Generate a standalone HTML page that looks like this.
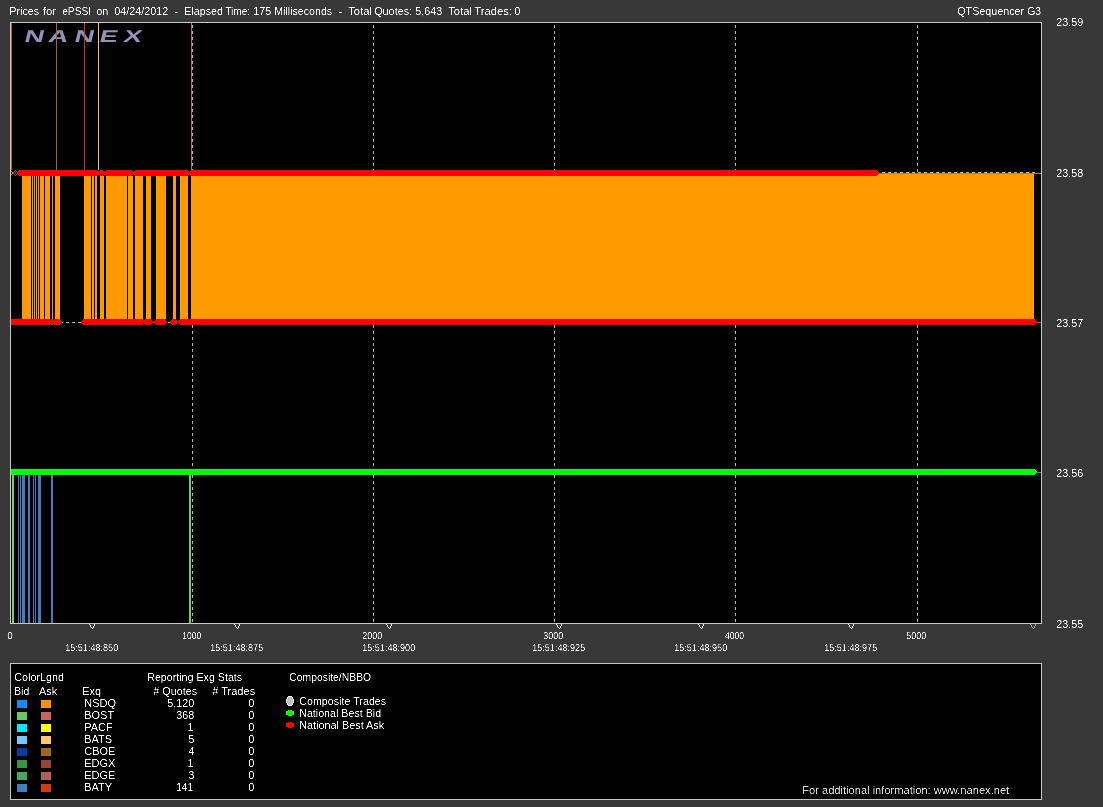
<!DOCTYPE html>
<html><head><meta charset="utf-8"><style>
html,body{margin:0;padding:0;background:#383838;width:1103px;height:807px;overflow:hidden}
svg{display:block;will-change:transform}
text{font-family:"Liberation Sans",sans-serif}
</style></head><body>
<svg width="1103" height="807" viewBox="0 0 1103 807">
<rect x="0" y="0" width="1103" height="807" fill="#383838"/>
<g shape-rendering="crispEdges">
<rect x="10" y="22" width="1032" height="602" fill="#c8c8c8"/>
<rect x="11" y="23" width="1030" height="600" fill="#000"/>
</g><g><text transform="translate(23.5,42) skewX(-14) scale(1.6,1)" x="0" y="0" font-size="17" font-weight="bold" fill="#9292bc" font-family="Liberation Sans, sans-serif">N</text>
<text transform="translate(47.5,42) skewX(-14) scale(1.6,1)" x="0" y="0" font-size="17" font-weight="bold" fill="#9292bc" font-family="Liberation Sans, sans-serif">A</text>
<text transform="translate(73.5,42) skewX(-14) scale(1.6,1)" x="0" y="0" font-size="17" font-weight="bold" fill="#9292bc" font-family="Liberation Sans, sans-serif">N</text>
<text transform="translate(98.5,42) skewX(-14) scale(1.6,1)" x="0" y="0" font-size="17" font-weight="bold" fill="#9292bc" font-family="Liberation Sans, sans-serif">E</text>
<text transform="translate(122.5,42) skewX(-14) scale(1.6,1)" x="0" y="0" font-size="17" font-weight="bold" fill="#9292bc" font-family="Liberation Sans, sans-serif">X</text></g><g shape-rendering="crispEdges">
<rect x="192" y="25" width="1" height="3" fill="#b4b4b4"/>
<rect x="192" y="31" width="1" height="3" fill="#b4b4b4"/>
<rect x="192" y="37" width="1" height="3" fill="#b4b4b4"/>
<rect x="192" y="43" width="1" height="3" fill="#b4b4b4"/>
<rect x="192" y="49" width="1" height="3" fill="#b4b4b4"/>
<rect x="192" y="55" width="1" height="3" fill="#b4b4b4"/>
<rect x="192" y="61" width="1" height="3" fill="#b4b4b4"/>
<rect x="192" y="67" width="1" height="3" fill="#b4b4b4"/>
<rect x="192" y="73" width="1" height="3" fill="#b4b4b4"/>
<rect x="192" y="79" width="1" height="3" fill="#b4b4b4"/>
<rect x="192" y="85" width="1" height="3" fill="#b4b4b4"/>
<rect x="192" y="91" width="1" height="3" fill="#b4b4b4"/>
<rect x="192" y="97" width="1" height="3" fill="#b4b4b4"/>
<rect x="192" y="103" width="1" height="3" fill="#b4b4b4"/>
<rect x="192" y="109" width="1" height="3" fill="#b4b4b4"/>
<rect x="192" y="115" width="1" height="3" fill="#b4b4b4"/>
<rect x="192" y="121" width="1" height="3" fill="#b4b4b4"/>
<rect x="192" y="127" width="1" height="3" fill="#b4b4b4"/>
<rect x="192" y="133" width="1" height="3" fill="#b4b4b4"/>
<rect x="192" y="139" width="1" height="3" fill="#b4b4b4"/>
<rect x="192" y="145" width="1" height="3" fill="#b4b4b4"/>
<rect x="192" y="151" width="1" height="3" fill="#b4b4b4"/>
<rect x="192" y="157" width="1" height="3" fill="#b4b4b4"/>
<rect x="192" y="163" width="1" height="3" fill="#b4b4b4"/>
<rect x="192" y="169" width="1" height="3" fill="#b4b4b4"/>
<rect x="192" y="175" width="1" height="3" fill="#b4b4b4"/>
<rect x="192" y="181" width="1" height="3" fill="#b4b4b4"/>
<rect x="192" y="187" width="1" height="3" fill="#b4b4b4"/>
<rect x="192" y="193" width="1" height="3" fill="#b4b4b4"/>
<rect x="192" y="199" width="1" height="3" fill="#b4b4b4"/>
<rect x="192" y="205" width="1" height="3" fill="#b4b4b4"/>
<rect x="192" y="211" width="1" height="3" fill="#b4b4b4"/>
<rect x="192" y="217" width="1" height="3" fill="#b4b4b4"/>
<rect x="192" y="223" width="1" height="3" fill="#b4b4b4"/>
<rect x="192" y="229" width="1" height="3" fill="#b4b4b4"/>
<rect x="192" y="235" width="1" height="3" fill="#b4b4b4"/>
<rect x="192" y="241" width="1" height="3" fill="#b4b4b4"/>
<rect x="192" y="247" width="1" height="3" fill="#b4b4b4"/>
<rect x="192" y="253" width="1" height="3" fill="#b4b4b4"/>
<rect x="192" y="259" width="1" height="3" fill="#b4b4b4"/>
<rect x="192" y="265" width="1" height="3" fill="#b4b4b4"/>
<rect x="192" y="271" width="1" height="3" fill="#b4b4b4"/>
<rect x="192" y="277" width="1" height="3" fill="#b4b4b4"/>
<rect x="192" y="283" width="1" height="3" fill="#b4b4b4"/>
<rect x="192" y="289" width="1" height="3" fill="#b4b4b4"/>
<rect x="192" y="295" width="1" height="3" fill="#b4b4b4"/>
<rect x="192" y="301" width="1" height="3" fill="#b4b4b4"/>
<rect x="192" y="307" width="1" height="3" fill="#b4b4b4"/>
<rect x="192" y="313" width="1" height="3" fill="#b4b4b4"/>
<rect x="192" y="319" width="1" height="3" fill="#b4b4b4"/>
<rect x="192" y="325" width="1" height="3" fill="#b4b4b4"/>
<rect x="192" y="331" width="1" height="3" fill="#b4b4b4"/>
<rect x="192" y="337" width="1" height="3" fill="#b4b4b4"/>
<rect x="192" y="343" width="1" height="3" fill="#b4b4b4"/>
<rect x="192" y="349" width="1" height="3" fill="#b4b4b4"/>
<rect x="192" y="355" width="1" height="3" fill="#b4b4b4"/>
<rect x="192" y="361" width="1" height="3" fill="#b4b4b4"/>
<rect x="192" y="367" width="1" height="3" fill="#b4b4b4"/>
<rect x="192" y="373" width="1" height="3" fill="#b4b4b4"/>
<rect x="192" y="379" width="1" height="3" fill="#b4b4b4"/>
<rect x="192" y="385" width="1" height="3" fill="#b4b4b4"/>
<rect x="192" y="391" width="1" height="3" fill="#b4b4b4"/>
<rect x="192" y="397" width="1" height="3" fill="#b4b4b4"/>
<rect x="192" y="403" width="1" height="3" fill="#b4b4b4"/>
<rect x="192" y="409" width="1" height="3" fill="#b4b4b4"/>
<rect x="192" y="415" width="1" height="3" fill="#b4b4b4"/>
<rect x="192" y="421" width="1" height="3" fill="#b4b4b4"/>
<rect x="192" y="427" width="1" height="3" fill="#b4b4b4"/>
<rect x="192" y="433" width="1" height="3" fill="#b4b4b4"/>
<rect x="192" y="439" width="1" height="3" fill="#b4b4b4"/>
<rect x="192" y="445" width="1" height="3" fill="#b4b4b4"/>
<rect x="192" y="451" width="1" height="3" fill="#b4b4b4"/>
<rect x="192" y="457" width="1" height="3" fill="#b4b4b4"/>
<rect x="192" y="463" width="1" height="3" fill="#b4b4b4"/>
<rect x="192" y="469" width="1" height="3" fill="#b4b4b4"/>
<rect x="192" y="475" width="1" height="3" fill="#b4b4b4"/>
<rect x="192" y="481" width="1" height="3" fill="#b4b4b4"/>
<rect x="192" y="487" width="1" height="3" fill="#b4b4b4"/>
<rect x="192" y="493" width="1" height="3" fill="#b4b4b4"/>
<rect x="192" y="499" width="1" height="3" fill="#b4b4b4"/>
<rect x="192" y="505" width="1" height="3" fill="#b4b4b4"/>
<rect x="192" y="511" width="1" height="3" fill="#b4b4b4"/>
<rect x="192" y="517" width="1" height="3" fill="#b4b4b4"/>
<rect x="192" y="523" width="1" height="3" fill="#b4b4b4"/>
<rect x="192" y="529" width="1" height="3" fill="#b4b4b4"/>
<rect x="192" y="535" width="1" height="3" fill="#b4b4b4"/>
<rect x="192" y="541" width="1" height="3" fill="#b4b4b4"/>
<rect x="192" y="547" width="1" height="3" fill="#b4b4b4"/>
<rect x="192" y="553" width="1" height="3" fill="#b4b4b4"/>
<rect x="192" y="559" width="1" height="3" fill="#b4b4b4"/>
<rect x="192" y="565" width="1" height="3" fill="#b4b4b4"/>
<rect x="192" y="571" width="1" height="3" fill="#b4b4b4"/>
<rect x="192" y="577" width="1" height="3" fill="#b4b4b4"/>
<rect x="192" y="583" width="1" height="3" fill="#b4b4b4"/>
<rect x="192" y="589" width="1" height="3" fill="#b4b4b4"/>
<rect x="192" y="595" width="1" height="3" fill="#b4b4b4"/>
<rect x="192" y="601" width="1" height="3" fill="#b4b4b4"/>
<rect x="192" y="607" width="1" height="3" fill="#b4b4b4"/>
<rect x="192" y="613" width="1" height="3" fill="#b4b4b4"/>
<rect x="192" y="619" width="1" height="3" fill="#b4b4b4"/>
<rect x="373" y="25" width="1" height="3" fill="#b4b4b4"/>
<rect x="373" y="31" width="1" height="3" fill="#b4b4b4"/>
<rect x="373" y="37" width="1" height="3" fill="#b4b4b4"/>
<rect x="373" y="43" width="1" height="3" fill="#b4b4b4"/>
<rect x="373" y="49" width="1" height="3" fill="#b4b4b4"/>
<rect x="373" y="55" width="1" height="3" fill="#b4b4b4"/>
<rect x="373" y="61" width="1" height="3" fill="#b4b4b4"/>
<rect x="373" y="67" width="1" height="3" fill="#b4b4b4"/>
<rect x="373" y="73" width="1" height="3" fill="#b4b4b4"/>
<rect x="373" y="79" width="1" height="3" fill="#b4b4b4"/>
<rect x="373" y="85" width="1" height="3" fill="#b4b4b4"/>
<rect x="373" y="91" width="1" height="3" fill="#b4b4b4"/>
<rect x="373" y="97" width="1" height="3" fill="#b4b4b4"/>
<rect x="373" y="103" width="1" height="3" fill="#b4b4b4"/>
<rect x="373" y="109" width="1" height="3" fill="#b4b4b4"/>
<rect x="373" y="115" width="1" height="3" fill="#b4b4b4"/>
<rect x="373" y="121" width="1" height="3" fill="#b4b4b4"/>
<rect x="373" y="127" width="1" height="3" fill="#b4b4b4"/>
<rect x="373" y="133" width="1" height="3" fill="#b4b4b4"/>
<rect x="373" y="139" width="1" height="3" fill="#b4b4b4"/>
<rect x="373" y="145" width="1" height="3" fill="#b4b4b4"/>
<rect x="373" y="151" width="1" height="3" fill="#b4b4b4"/>
<rect x="373" y="157" width="1" height="3" fill="#b4b4b4"/>
<rect x="373" y="163" width="1" height="3" fill="#b4b4b4"/>
<rect x="373" y="169" width="1" height="3" fill="#b4b4b4"/>
<rect x="373" y="175" width="1" height="3" fill="#b4b4b4"/>
<rect x="373" y="181" width="1" height="3" fill="#b4b4b4"/>
<rect x="373" y="187" width="1" height="3" fill="#b4b4b4"/>
<rect x="373" y="193" width="1" height="3" fill="#b4b4b4"/>
<rect x="373" y="199" width="1" height="3" fill="#b4b4b4"/>
<rect x="373" y="205" width="1" height="3" fill="#b4b4b4"/>
<rect x="373" y="211" width="1" height="3" fill="#b4b4b4"/>
<rect x="373" y="217" width="1" height="3" fill="#b4b4b4"/>
<rect x="373" y="223" width="1" height="3" fill="#b4b4b4"/>
<rect x="373" y="229" width="1" height="3" fill="#b4b4b4"/>
<rect x="373" y="235" width="1" height="3" fill="#b4b4b4"/>
<rect x="373" y="241" width="1" height="3" fill="#b4b4b4"/>
<rect x="373" y="247" width="1" height="3" fill="#b4b4b4"/>
<rect x="373" y="253" width="1" height="3" fill="#b4b4b4"/>
<rect x="373" y="259" width="1" height="3" fill="#b4b4b4"/>
<rect x="373" y="265" width="1" height="3" fill="#b4b4b4"/>
<rect x="373" y="271" width="1" height="3" fill="#b4b4b4"/>
<rect x="373" y="277" width="1" height="3" fill="#b4b4b4"/>
<rect x="373" y="283" width="1" height="3" fill="#b4b4b4"/>
<rect x="373" y="289" width="1" height="3" fill="#b4b4b4"/>
<rect x="373" y="295" width="1" height="3" fill="#b4b4b4"/>
<rect x="373" y="301" width="1" height="3" fill="#b4b4b4"/>
<rect x="373" y="307" width="1" height="3" fill="#b4b4b4"/>
<rect x="373" y="313" width="1" height="3" fill="#b4b4b4"/>
<rect x="373" y="319" width="1" height="3" fill="#b4b4b4"/>
<rect x="373" y="325" width="1" height="3" fill="#b4b4b4"/>
<rect x="373" y="331" width="1" height="3" fill="#b4b4b4"/>
<rect x="373" y="337" width="1" height="3" fill="#b4b4b4"/>
<rect x="373" y="343" width="1" height="3" fill="#b4b4b4"/>
<rect x="373" y="349" width="1" height="3" fill="#b4b4b4"/>
<rect x="373" y="355" width="1" height="3" fill="#b4b4b4"/>
<rect x="373" y="361" width="1" height="3" fill="#b4b4b4"/>
<rect x="373" y="367" width="1" height="3" fill="#b4b4b4"/>
<rect x="373" y="373" width="1" height="3" fill="#b4b4b4"/>
<rect x="373" y="379" width="1" height="3" fill="#b4b4b4"/>
<rect x="373" y="385" width="1" height="3" fill="#b4b4b4"/>
<rect x="373" y="391" width="1" height="3" fill="#b4b4b4"/>
<rect x="373" y="397" width="1" height="3" fill="#b4b4b4"/>
<rect x="373" y="403" width="1" height="3" fill="#b4b4b4"/>
<rect x="373" y="409" width="1" height="3" fill="#b4b4b4"/>
<rect x="373" y="415" width="1" height="3" fill="#b4b4b4"/>
<rect x="373" y="421" width="1" height="3" fill="#b4b4b4"/>
<rect x="373" y="427" width="1" height="3" fill="#b4b4b4"/>
<rect x="373" y="433" width="1" height="3" fill="#b4b4b4"/>
<rect x="373" y="439" width="1" height="3" fill="#b4b4b4"/>
<rect x="373" y="445" width="1" height="3" fill="#b4b4b4"/>
<rect x="373" y="451" width="1" height="3" fill="#b4b4b4"/>
<rect x="373" y="457" width="1" height="3" fill="#b4b4b4"/>
<rect x="373" y="463" width="1" height="3" fill="#b4b4b4"/>
<rect x="373" y="469" width="1" height="3" fill="#b4b4b4"/>
<rect x="373" y="475" width="1" height="3" fill="#b4b4b4"/>
<rect x="373" y="481" width="1" height="3" fill="#b4b4b4"/>
<rect x="373" y="487" width="1" height="3" fill="#b4b4b4"/>
<rect x="373" y="493" width="1" height="3" fill="#b4b4b4"/>
<rect x="373" y="499" width="1" height="3" fill="#b4b4b4"/>
<rect x="373" y="505" width="1" height="3" fill="#b4b4b4"/>
<rect x="373" y="511" width="1" height="3" fill="#b4b4b4"/>
<rect x="373" y="517" width="1" height="3" fill="#b4b4b4"/>
<rect x="373" y="523" width="1" height="3" fill="#b4b4b4"/>
<rect x="373" y="529" width="1" height="3" fill="#b4b4b4"/>
<rect x="373" y="535" width="1" height="3" fill="#b4b4b4"/>
<rect x="373" y="541" width="1" height="3" fill="#b4b4b4"/>
<rect x="373" y="547" width="1" height="3" fill="#b4b4b4"/>
<rect x="373" y="553" width="1" height="3" fill="#b4b4b4"/>
<rect x="373" y="559" width="1" height="3" fill="#b4b4b4"/>
<rect x="373" y="565" width="1" height="3" fill="#b4b4b4"/>
<rect x="373" y="571" width="1" height="3" fill="#b4b4b4"/>
<rect x="373" y="577" width="1" height="3" fill="#b4b4b4"/>
<rect x="373" y="583" width="1" height="3" fill="#b4b4b4"/>
<rect x="373" y="589" width="1" height="3" fill="#b4b4b4"/>
<rect x="373" y="595" width="1" height="3" fill="#b4b4b4"/>
<rect x="373" y="601" width="1" height="3" fill="#b4b4b4"/>
<rect x="373" y="607" width="1" height="3" fill="#b4b4b4"/>
<rect x="373" y="613" width="1" height="3" fill="#b4b4b4"/>
<rect x="373" y="619" width="1" height="3" fill="#b4b4b4"/>
<rect x="554" y="25" width="1" height="3" fill="#b4b4b4"/>
<rect x="554" y="31" width="1" height="3" fill="#b4b4b4"/>
<rect x="554" y="37" width="1" height="3" fill="#b4b4b4"/>
<rect x="554" y="43" width="1" height="3" fill="#b4b4b4"/>
<rect x="554" y="49" width="1" height="3" fill="#b4b4b4"/>
<rect x="554" y="55" width="1" height="3" fill="#b4b4b4"/>
<rect x="554" y="61" width="1" height="3" fill="#b4b4b4"/>
<rect x="554" y="67" width="1" height="3" fill="#b4b4b4"/>
<rect x="554" y="73" width="1" height="3" fill="#b4b4b4"/>
<rect x="554" y="79" width="1" height="3" fill="#b4b4b4"/>
<rect x="554" y="85" width="1" height="3" fill="#b4b4b4"/>
<rect x="554" y="91" width="1" height="3" fill="#b4b4b4"/>
<rect x="554" y="97" width="1" height="3" fill="#b4b4b4"/>
<rect x="554" y="103" width="1" height="3" fill="#b4b4b4"/>
<rect x="554" y="109" width="1" height="3" fill="#b4b4b4"/>
<rect x="554" y="115" width="1" height="3" fill="#b4b4b4"/>
<rect x="554" y="121" width="1" height="3" fill="#b4b4b4"/>
<rect x="554" y="127" width="1" height="3" fill="#b4b4b4"/>
<rect x="554" y="133" width="1" height="3" fill="#b4b4b4"/>
<rect x="554" y="139" width="1" height="3" fill="#b4b4b4"/>
<rect x="554" y="145" width="1" height="3" fill="#b4b4b4"/>
<rect x="554" y="151" width="1" height="3" fill="#b4b4b4"/>
<rect x="554" y="157" width="1" height="3" fill="#b4b4b4"/>
<rect x="554" y="163" width="1" height="3" fill="#b4b4b4"/>
<rect x="554" y="169" width="1" height="3" fill="#b4b4b4"/>
<rect x="554" y="175" width="1" height="3" fill="#b4b4b4"/>
<rect x="554" y="181" width="1" height="3" fill="#b4b4b4"/>
<rect x="554" y="187" width="1" height="3" fill="#b4b4b4"/>
<rect x="554" y="193" width="1" height="3" fill="#b4b4b4"/>
<rect x="554" y="199" width="1" height="3" fill="#b4b4b4"/>
<rect x="554" y="205" width="1" height="3" fill="#b4b4b4"/>
<rect x="554" y="211" width="1" height="3" fill="#b4b4b4"/>
<rect x="554" y="217" width="1" height="3" fill="#b4b4b4"/>
<rect x="554" y="223" width="1" height="3" fill="#b4b4b4"/>
<rect x="554" y="229" width="1" height="3" fill="#b4b4b4"/>
<rect x="554" y="235" width="1" height="3" fill="#b4b4b4"/>
<rect x="554" y="241" width="1" height="3" fill="#b4b4b4"/>
<rect x="554" y="247" width="1" height="3" fill="#b4b4b4"/>
<rect x="554" y="253" width="1" height="3" fill="#b4b4b4"/>
<rect x="554" y="259" width="1" height="3" fill="#b4b4b4"/>
<rect x="554" y="265" width="1" height="3" fill="#b4b4b4"/>
<rect x="554" y="271" width="1" height="3" fill="#b4b4b4"/>
<rect x="554" y="277" width="1" height="3" fill="#b4b4b4"/>
<rect x="554" y="283" width="1" height="3" fill="#b4b4b4"/>
<rect x="554" y="289" width="1" height="3" fill="#b4b4b4"/>
<rect x="554" y="295" width="1" height="3" fill="#b4b4b4"/>
<rect x="554" y="301" width="1" height="3" fill="#b4b4b4"/>
<rect x="554" y="307" width="1" height="3" fill="#b4b4b4"/>
<rect x="554" y="313" width="1" height="3" fill="#b4b4b4"/>
<rect x="554" y="319" width="1" height="3" fill="#b4b4b4"/>
<rect x="554" y="325" width="1" height="3" fill="#b4b4b4"/>
<rect x="554" y="331" width="1" height="3" fill="#b4b4b4"/>
<rect x="554" y="337" width="1" height="3" fill="#b4b4b4"/>
<rect x="554" y="343" width="1" height="3" fill="#b4b4b4"/>
<rect x="554" y="349" width="1" height="3" fill="#b4b4b4"/>
<rect x="554" y="355" width="1" height="3" fill="#b4b4b4"/>
<rect x="554" y="361" width="1" height="3" fill="#b4b4b4"/>
<rect x="554" y="367" width="1" height="3" fill="#b4b4b4"/>
<rect x="554" y="373" width="1" height="3" fill="#b4b4b4"/>
<rect x="554" y="379" width="1" height="3" fill="#b4b4b4"/>
<rect x="554" y="385" width="1" height="3" fill="#b4b4b4"/>
<rect x="554" y="391" width="1" height="3" fill="#b4b4b4"/>
<rect x="554" y="397" width="1" height="3" fill="#b4b4b4"/>
<rect x="554" y="403" width="1" height="3" fill="#b4b4b4"/>
<rect x="554" y="409" width="1" height="3" fill="#b4b4b4"/>
<rect x="554" y="415" width="1" height="3" fill="#b4b4b4"/>
<rect x="554" y="421" width="1" height="3" fill="#b4b4b4"/>
<rect x="554" y="427" width="1" height="3" fill="#b4b4b4"/>
<rect x="554" y="433" width="1" height="3" fill="#b4b4b4"/>
<rect x="554" y="439" width="1" height="3" fill="#b4b4b4"/>
<rect x="554" y="445" width="1" height="3" fill="#b4b4b4"/>
<rect x="554" y="451" width="1" height="3" fill="#b4b4b4"/>
<rect x="554" y="457" width="1" height="3" fill="#b4b4b4"/>
<rect x="554" y="463" width="1" height="3" fill="#b4b4b4"/>
<rect x="554" y="469" width="1" height="3" fill="#b4b4b4"/>
<rect x="554" y="475" width="1" height="3" fill="#b4b4b4"/>
<rect x="554" y="481" width="1" height="3" fill="#b4b4b4"/>
<rect x="554" y="487" width="1" height="3" fill="#b4b4b4"/>
<rect x="554" y="493" width="1" height="3" fill="#b4b4b4"/>
<rect x="554" y="499" width="1" height="3" fill="#b4b4b4"/>
<rect x="554" y="505" width="1" height="3" fill="#b4b4b4"/>
<rect x="554" y="511" width="1" height="3" fill="#b4b4b4"/>
<rect x="554" y="517" width="1" height="3" fill="#b4b4b4"/>
<rect x="554" y="523" width="1" height="3" fill="#b4b4b4"/>
<rect x="554" y="529" width="1" height="3" fill="#b4b4b4"/>
<rect x="554" y="535" width="1" height="3" fill="#b4b4b4"/>
<rect x="554" y="541" width="1" height="3" fill="#b4b4b4"/>
<rect x="554" y="547" width="1" height="3" fill="#b4b4b4"/>
<rect x="554" y="553" width="1" height="3" fill="#b4b4b4"/>
<rect x="554" y="559" width="1" height="3" fill="#b4b4b4"/>
<rect x="554" y="565" width="1" height="3" fill="#b4b4b4"/>
<rect x="554" y="571" width="1" height="3" fill="#b4b4b4"/>
<rect x="554" y="577" width="1" height="3" fill="#b4b4b4"/>
<rect x="554" y="583" width="1" height="3" fill="#b4b4b4"/>
<rect x="554" y="589" width="1" height="3" fill="#b4b4b4"/>
<rect x="554" y="595" width="1" height="3" fill="#b4b4b4"/>
<rect x="554" y="601" width="1" height="3" fill="#b4b4b4"/>
<rect x="554" y="607" width="1" height="3" fill="#b4b4b4"/>
<rect x="554" y="613" width="1" height="3" fill="#b4b4b4"/>
<rect x="554" y="619" width="1" height="3" fill="#b4b4b4"/>
<rect x="735" y="25" width="1" height="3" fill="#b4b4b4"/>
<rect x="735" y="31" width="1" height="3" fill="#b4b4b4"/>
<rect x="735" y="37" width="1" height="3" fill="#b4b4b4"/>
<rect x="735" y="43" width="1" height="3" fill="#b4b4b4"/>
<rect x="735" y="49" width="1" height="3" fill="#b4b4b4"/>
<rect x="735" y="55" width="1" height="3" fill="#b4b4b4"/>
<rect x="735" y="61" width="1" height="3" fill="#b4b4b4"/>
<rect x="735" y="67" width="1" height="3" fill="#b4b4b4"/>
<rect x="735" y="73" width="1" height="3" fill="#b4b4b4"/>
<rect x="735" y="79" width="1" height="3" fill="#b4b4b4"/>
<rect x="735" y="85" width="1" height="3" fill="#b4b4b4"/>
<rect x="735" y="91" width="1" height="3" fill="#b4b4b4"/>
<rect x="735" y="97" width="1" height="3" fill="#b4b4b4"/>
<rect x="735" y="103" width="1" height="3" fill="#b4b4b4"/>
<rect x="735" y="109" width="1" height="3" fill="#b4b4b4"/>
<rect x="735" y="115" width="1" height="3" fill="#b4b4b4"/>
<rect x="735" y="121" width="1" height="3" fill="#b4b4b4"/>
<rect x="735" y="127" width="1" height="3" fill="#b4b4b4"/>
<rect x="735" y="133" width="1" height="3" fill="#b4b4b4"/>
<rect x="735" y="139" width="1" height="3" fill="#b4b4b4"/>
<rect x="735" y="145" width="1" height="3" fill="#b4b4b4"/>
<rect x="735" y="151" width="1" height="3" fill="#b4b4b4"/>
<rect x="735" y="157" width="1" height="3" fill="#b4b4b4"/>
<rect x="735" y="163" width="1" height="3" fill="#b4b4b4"/>
<rect x="735" y="169" width="1" height="3" fill="#b4b4b4"/>
<rect x="735" y="175" width="1" height="3" fill="#b4b4b4"/>
<rect x="735" y="181" width="1" height="3" fill="#b4b4b4"/>
<rect x="735" y="187" width="1" height="3" fill="#b4b4b4"/>
<rect x="735" y="193" width="1" height="3" fill="#b4b4b4"/>
<rect x="735" y="199" width="1" height="3" fill="#b4b4b4"/>
<rect x="735" y="205" width="1" height="3" fill="#b4b4b4"/>
<rect x="735" y="211" width="1" height="3" fill="#b4b4b4"/>
<rect x="735" y="217" width="1" height="3" fill="#b4b4b4"/>
<rect x="735" y="223" width="1" height="3" fill="#b4b4b4"/>
<rect x="735" y="229" width="1" height="3" fill="#b4b4b4"/>
<rect x="735" y="235" width="1" height="3" fill="#b4b4b4"/>
<rect x="735" y="241" width="1" height="3" fill="#b4b4b4"/>
<rect x="735" y="247" width="1" height="3" fill="#b4b4b4"/>
<rect x="735" y="253" width="1" height="3" fill="#b4b4b4"/>
<rect x="735" y="259" width="1" height="3" fill="#b4b4b4"/>
<rect x="735" y="265" width="1" height="3" fill="#b4b4b4"/>
<rect x="735" y="271" width="1" height="3" fill="#b4b4b4"/>
<rect x="735" y="277" width="1" height="3" fill="#b4b4b4"/>
<rect x="735" y="283" width="1" height="3" fill="#b4b4b4"/>
<rect x="735" y="289" width="1" height="3" fill="#b4b4b4"/>
<rect x="735" y="295" width="1" height="3" fill="#b4b4b4"/>
<rect x="735" y="301" width="1" height="3" fill="#b4b4b4"/>
<rect x="735" y="307" width="1" height="3" fill="#b4b4b4"/>
<rect x="735" y="313" width="1" height="3" fill="#b4b4b4"/>
<rect x="735" y="319" width="1" height="3" fill="#b4b4b4"/>
<rect x="735" y="325" width="1" height="3" fill="#b4b4b4"/>
<rect x="735" y="331" width="1" height="3" fill="#b4b4b4"/>
<rect x="735" y="337" width="1" height="3" fill="#b4b4b4"/>
<rect x="735" y="343" width="1" height="3" fill="#b4b4b4"/>
<rect x="735" y="349" width="1" height="3" fill="#b4b4b4"/>
<rect x="735" y="355" width="1" height="3" fill="#b4b4b4"/>
<rect x="735" y="361" width="1" height="3" fill="#b4b4b4"/>
<rect x="735" y="367" width="1" height="3" fill="#b4b4b4"/>
<rect x="735" y="373" width="1" height="3" fill="#b4b4b4"/>
<rect x="735" y="379" width="1" height="3" fill="#b4b4b4"/>
<rect x="735" y="385" width="1" height="3" fill="#b4b4b4"/>
<rect x="735" y="391" width="1" height="3" fill="#b4b4b4"/>
<rect x="735" y="397" width="1" height="3" fill="#b4b4b4"/>
<rect x="735" y="403" width="1" height="3" fill="#b4b4b4"/>
<rect x="735" y="409" width="1" height="3" fill="#b4b4b4"/>
<rect x="735" y="415" width="1" height="3" fill="#b4b4b4"/>
<rect x="735" y="421" width="1" height="3" fill="#b4b4b4"/>
<rect x="735" y="427" width="1" height="3" fill="#b4b4b4"/>
<rect x="735" y="433" width="1" height="3" fill="#b4b4b4"/>
<rect x="735" y="439" width="1" height="3" fill="#b4b4b4"/>
<rect x="735" y="445" width="1" height="3" fill="#b4b4b4"/>
<rect x="735" y="451" width="1" height="3" fill="#b4b4b4"/>
<rect x="735" y="457" width="1" height="3" fill="#b4b4b4"/>
<rect x="735" y="463" width="1" height="3" fill="#b4b4b4"/>
<rect x="735" y="469" width="1" height="3" fill="#b4b4b4"/>
<rect x="735" y="475" width="1" height="3" fill="#b4b4b4"/>
<rect x="735" y="481" width="1" height="3" fill="#b4b4b4"/>
<rect x="735" y="487" width="1" height="3" fill="#b4b4b4"/>
<rect x="735" y="493" width="1" height="3" fill="#b4b4b4"/>
<rect x="735" y="499" width="1" height="3" fill="#b4b4b4"/>
<rect x="735" y="505" width="1" height="3" fill="#b4b4b4"/>
<rect x="735" y="511" width="1" height="3" fill="#b4b4b4"/>
<rect x="735" y="517" width="1" height="3" fill="#b4b4b4"/>
<rect x="735" y="523" width="1" height="3" fill="#b4b4b4"/>
<rect x="735" y="529" width="1" height="3" fill="#b4b4b4"/>
<rect x="735" y="535" width="1" height="3" fill="#b4b4b4"/>
<rect x="735" y="541" width="1" height="3" fill="#b4b4b4"/>
<rect x="735" y="547" width="1" height="3" fill="#b4b4b4"/>
<rect x="735" y="553" width="1" height="3" fill="#b4b4b4"/>
<rect x="735" y="559" width="1" height="3" fill="#b4b4b4"/>
<rect x="735" y="565" width="1" height="3" fill="#b4b4b4"/>
<rect x="735" y="571" width="1" height="3" fill="#b4b4b4"/>
<rect x="735" y="577" width="1" height="3" fill="#b4b4b4"/>
<rect x="735" y="583" width="1" height="3" fill="#b4b4b4"/>
<rect x="735" y="589" width="1" height="3" fill="#b4b4b4"/>
<rect x="735" y="595" width="1" height="3" fill="#b4b4b4"/>
<rect x="735" y="601" width="1" height="3" fill="#b4b4b4"/>
<rect x="735" y="607" width="1" height="3" fill="#b4b4b4"/>
<rect x="735" y="613" width="1" height="3" fill="#b4b4b4"/>
<rect x="735" y="619" width="1" height="3" fill="#b4b4b4"/>
<rect x="917" y="25" width="1" height="3" fill="#b4b4b4"/>
<rect x="917" y="31" width="1" height="3" fill="#b4b4b4"/>
<rect x="917" y="37" width="1" height="3" fill="#b4b4b4"/>
<rect x="917" y="43" width="1" height="3" fill="#b4b4b4"/>
<rect x="917" y="49" width="1" height="3" fill="#b4b4b4"/>
<rect x="917" y="55" width="1" height="3" fill="#b4b4b4"/>
<rect x="917" y="61" width="1" height="3" fill="#b4b4b4"/>
<rect x="917" y="67" width="1" height="3" fill="#b4b4b4"/>
<rect x="917" y="73" width="1" height="3" fill="#b4b4b4"/>
<rect x="917" y="79" width="1" height="3" fill="#b4b4b4"/>
<rect x="917" y="85" width="1" height="3" fill="#b4b4b4"/>
<rect x="917" y="91" width="1" height="3" fill="#b4b4b4"/>
<rect x="917" y="97" width="1" height="3" fill="#b4b4b4"/>
<rect x="917" y="103" width="1" height="3" fill="#b4b4b4"/>
<rect x="917" y="109" width="1" height="3" fill="#b4b4b4"/>
<rect x="917" y="115" width="1" height="3" fill="#b4b4b4"/>
<rect x="917" y="121" width="1" height="3" fill="#b4b4b4"/>
<rect x="917" y="127" width="1" height="3" fill="#b4b4b4"/>
<rect x="917" y="133" width="1" height="3" fill="#b4b4b4"/>
<rect x="917" y="139" width="1" height="3" fill="#b4b4b4"/>
<rect x="917" y="145" width="1" height="3" fill="#b4b4b4"/>
<rect x="917" y="151" width="1" height="3" fill="#b4b4b4"/>
<rect x="917" y="157" width="1" height="3" fill="#b4b4b4"/>
<rect x="917" y="163" width="1" height="3" fill="#b4b4b4"/>
<rect x="917" y="169" width="1" height="3" fill="#b4b4b4"/>
<rect x="917" y="175" width="1" height="3" fill="#b4b4b4"/>
<rect x="917" y="181" width="1" height="3" fill="#b4b4b4"/>
<rect x="917" y="187" width="1" height="3" fill="#b4b4b4"/>
<rect x="917" y="193" width="1" height="3" fill="#b4b4b4"/>
<rect x="917" y="199" width="1" height="3" fill="#b4b4b4"/>
<rect x="917" y="205" width="1" height="3" fill="#b4b4b4"/>
<rect x="917" y="211" width="1" height="3" fill="#b4b4b4"/>
<rect x="917" y="217" width="1" height="3" fill="#b4b4b4"/>
<rect x="917" y="223" width="1" height="3" fill="#b4b4b4"/>
<rect x="917" y="229" width="1" height="3" fill="#b4b4b4"/>
<rect x="917" y="235" width="1" height="3" fill="#b4b4b4"/>
<rect x="917" y="241" width="1" height="3" fill="#b4b4b4"/>
<rect x="917" y="247" width="1" height="3" fill="#b4b4b4"/>
<rect x="917" y="253" width="1" height="3" fill="#b4b4b4"/>
<rect x="917" y="259" width="1" height="3" fill="#b4b4b4"/>
<rect x="917" y="265" width="1" height="3" fill="#b4b4b4"/>
<rect x="917" y="271" width="1" height="3" fill="#b4b4b4"/>
<rect x="917" y="277" width="1" height="3" fill="#b4b4b4"/>
<rect x="917" y="283" width="1" height="3" fill="#b4b4b4"/>
<rect x="917" y="289" width="1" height="3" fill="#b4b4b4"/>
<rect x="917" y="295" width="1" height="3" fill="#b4b4b4"/>
<rect x="917" y="301" width="1" height="3" fill="#b4b4b4"/>
<rect x="917" y="307" width="1" height="3" fill="#b4b4b4"/>
<rect x="917" y="313" width="1" height="3" fill="#b4b4b4"/>
<rect x="917" y="319" width="1" height="3" fill="#b4b4b4"/>
<rect x="917" y="325" width="1" height="3" fill="#b4b4b4"/>
<rect x="917" y="331" width="1" height="3" fill="#b4b4b4"/>
<rect x="917" y="337" width="1" height="3" fill="#b4b4b4"/>
<rect x="917" y="343" width="1" height="3" fill="#b4b4b4"/>
<rect x="917" y="349" width="1" height="3" fill="#b4b4b4"/>
<rect x="917" y="355" width="1" height="3" fill="#b4b4b4"/>
<rect x="917" y="361" width="1" height="3" fill="#b4b4b4"/>
<rect x="917" y="367" width="1" height="3" fill="#b4b4b4"/>
<rect x="917" y="373" width="1" height="3" fill="#b4b4b4"/>
<rect x="917" y="379" width="1" height="3" fill="#b4b4b4"/>
<rect x="917" y="385" width="1" height="3" fill="#b4b4b4"/>
<rect x="917" y="391" width="1" height="3" fill="#b4b4b4"/>
<rect x="917" y="397" width="1" height="3" fill="#b4b4b4"/>
<rect x="917" y="403" width="1" height="3" fill="#b4b4b4"/>
<rect x="917" y="409" width="1" height="3" fill="#b4b4b4"/>
<rect x="917" y="415" width="1" height="3" fill="#b4b4b4"/>
<rect x="917" y="421" width="1" height="3" fill="#b4b4b4"/>
<rect x="917" y="427" width="1" height="3" fill="#b4b4b4"/>
<rect x="917" y="433" width="1" height="3" fill="#b4b4b4"/>
<rect x="917" y="439" width="1" height="3" fill="#b4b4b4"/>
<rect x="917" y="445" width="1" height="3" fill="#b4b4b4"/>
<rect x="917" y="451" width="1" height="3" fill="#b4b4b4"/>
<rect x="917" y="457" width="1" height="3" fill="#b4b4b4"/>
<rect x="917" y="463" width="1" height="3" fill="#b4b4b4"/>
<rect x="917" y="469" width="1" height="3" fill="#b4b4b4"/>
<rect x="917" y="475" width="1" height="3" fill="#b4b4b4"/>
<rect x="917" y="481" width="1" height="3" fill="#b4b4b4"/>
<rect x="917" y="487" width="1" height="3" fill="#b4b4b4"/>
<rect x="917" y="493" width="1" height="3" fill="#b4b4b4"/>
<rect x="917" y="499" width="1" height="3" fill="#b4b4b4"/>
<rect x="917" y="505" width="1" height="3" fill="#b4b4b4"/>
<rect x="917" y="511" width="1" height="3" fill="#b4b4b4"/>
<rect x="917" y="517" width="1" height="3" fill="#b4b4b4"/>
<rect x="917" y="523" width="1" height="3" fill="#b4b4b4"/>
<rect x="917" y="529" width="1" height="3" fill="#b4b4b4"/>
<rect x="917" y="535" width="1" height="3" fill="#b4b4b4"/>
<rect x="917" y="541" width="1" height="3" fill="#b4b4b4"/>
<rect x="917" y="547" width="1" height="3" fill="#b4b4b4"/>
<rect x="917" y="553" width="1" height="3" fill="#b4b4b4"/>
<rect x="917" y="559" width="1" height="3" fill="#b4b4b4"/>
<rect x="917" y="565" width="1" height="3" fill="#b4b4b4"/>
<rect x="917" y="571" width="1" height="3" fill="#b4b4b4"/>
<rect x="917" y="577" width="1" height="3" fill="#b4b4b4"/>
<rect x="917" y="583" width="1" height="3" fill="#b4b4b4"/>
<rect x="917" y="589" width="1" height="3" fill="#b4b4b4"/>
<rect x="917" y="595" width="1" height="3" fill="#b4b4b4"/>
<rect x="917" y="601" width="1" height="3" fill="#b4b4b4"/>
<rect x="917" y="607" width="1" height="3" fill="#b4b4b4"/>
<rect x="917" y="613" width="1" height="3" fill="#b4b4b4"/>
<rect x="917" y="619" width="1" height="3" fill="#b4b4b4"/>
<rect x="882" y="172" width="3" height="1" fill="#b4b4b4"/>
<rect x="888" y="172" width="3" height="1" fill="#b4b4b4"/>
<rect x="894" y="172" width="3" height="1" fill="#b4b4b4"/>
<rect x="900" y="172" width="3" height="1" fill="#b4b4b4"/>
<rect x="906" y="172" width="3" height="1" fill="#b4b4b4"/>
<rect x="912" y="172" width="3" height="1" fill="#b4b4b4"/>
<rect x="918" y="172" width="3" height="1" fill="#b4b4b4"/>
<rect x="924" y="172" width="3" height="1" fill="#b4b4b4"/>
<rect x="930" y="172" width="3" height="1" fill="#b4b4b4"/>
<rect x="936" y="172" width="3" height="1" fill="#b4b4b4"/>
<rect x="942" y="172" width="3" height="1" fill="#b4b4b4"/>
<rect x="948" y="172" width="3" height="1" fill="#b4b4b4"/>
<rect x="954" y="172" width="3" height="1" fill="#b4b4b4"/>
<rect x="960" y="172" width="3" height="1" fill="#b4b4b4"/>
<rect x="966" y="172" width="3" height="1" fill="#b4b4b4"/>
<rect x="972" y="172" width="3" height="1" fill="#b4b4b4"/>
<rect x="978" y="172" width="3" height="1" fill="#b4b4b4"/>
<rect x="984" y="172" width="3" height="1" fill="#b4b4b4"/>
<rect x="990" y="172" width="3" height="1" fill="#b4b4b4"/>
<rect x="996" y="172" width="3" height="1" fill="#b4b4b4"/>
<rect x="1002" y="172" width="3" height="1" fill="#b4b4b4"/>
<rect x="1008" y="172" width="3" height="1" fill="#b4b4b4"/>
<rect x="1014" y="172" width="3" height="1" fill="#b4b4b4"/>
<rect x="1020" y="172" width="3" height="1" fill="#b4b4b4"/>
<rect x="1026" y="172" width="3" height="1" fill="#b4b4b4"/>
<rect x="1032" y="172" width="3" height="1" fill="#b4b4b4"/>
<rect x="62" y="322" width="1" height="1" fill="#b4b4b4"/>
<rect x="66" y="322" width="3" height="1" fill="#b4b4b4"/>
<rect x="72" y="322" width="3" height="1" fill="#b4b4b4"/>
<rect x="78" y="322" width="3" height="1" fill="#b4b4b4"/>
<rect x="11" y="23" width="1" height="147" fill="#a86a08"/>
<rect x="56" y="23" width="1" height="147" fill="#b25a4a"/>
<rect x="84" y="23" width="1" height="147" fill="#d03808"/>
<rect x="98" y="23" width="1" height="147" fill="#ffc468"/>
<rect x="191" y="23" width="1" height="147" fill="#cc6464"/>
<rect x="22" y="176" width="9" height="143" fill="#ff9a00"/>
<rect x="32" y="176" width="1" height="143" fill="#ff9a00"/>
<rect x="34" y="176" width="1" height="143" fill="#ff9a00"/>
<rect x="36" y="176" width="1" height="143" fill="#ff9a00"/>
<rect x="38" y="176" width="1" height="143" fill="#ff9a00"/>
<rect x="40" y="176" width="4" height="143" fill="#ff9a00"/>
<rect x="45" y="176" width="5" height="143" fill="#ff9a00"/>
<rect x="52" y="176" width="1" height="143" fill="#ff9a00"/>
<rect x="55" y="176" width="5" height="143" fill="#ff9a00"/>
<rect x="84" y="176" width="7" height="143" fill="#ff9a00"/>
<rect x="92" y="176" width="2" height="143" fill="#ff9a00"/>
<rect x="95" y="176" width="2" height="143" fill="#ff9a00"/>
<rect x="100" y="176" width="4" height="143" fill="#ff9a00"/>
<rect x="106" y="176" width="21" height="143" fill="#ff9a00"/>
<rect x="128" y="176" width="5" height="143" fill="#ff9a00"/>
<rect x="135" y="176" width="8" height="143" fill="#ff9a00"/>
<rect x="146" y="176" width="5" height="143" fill="#ff9a00"/>
<rect x="156" y="176" width="10" height="143" fill="#ff9a00"/>
<rect x="173" y="176" width="3" height="143" fill="#ff9a00"/>
<rect x="180" y="176" width="8" height="143" fill="#ff9a00"/>
<rect x="191" y="176" width="843" height="143" fill="#ff9a00"/>
<rect x="876" y="174" width="158" height="2" fill="#ff9a00"/>
<rect x="876" y="173" width="165" height="1" fill="#c88000"/>
<rect x="19" y="170" width="858" height="6" fill="#ff0000"/>
<rect x="18" y="171" width="860" height="4" fill="#ff0000"/>
<rect x="17" y="172" width="862" height="2" fill="#ff0000"/>
<rect x="97" y="170" width="3" height="1" fill="#000"/>
<rect x="97" y="175" width="3" height="1" fill="#000"/>
<rect x="103" y="170" width="3" height="1" fill="#000"/>
<rect x="103" y="175" width="3" height="1" fill="#000"/>
<rect x="132" y="170" width="3" height="1" fill="#000"/>
<rect x="132" y="175" width="3" height="1" fill="#000"/>
<rect x="133" y="171" width="1" height="1" fill="#000"/>
<rect x="133" y="174" width="1" height="1" fill="#000"/>
<rect x="188" y="170" width="3" height="1" fill="#000"/>
<rect x="188" y="175" width="3" height="1" fill="#000"/>
<rect x="189" y="171" width="1" height="1" fill="#000"/>
<rect x="189" y="174" width="1" height="1" fill="#000"/>
<rect x="11" y="171" width="1" height="1" fill="#c08000"/>
<rect x="12" y="172" width="1" height="1" fill="#c08000"/>
<rect x="12" y="173" width="1" height="1" fill="#c08000"/>
<rect x="11" y="174" width="1" height="1" fill="#c08000"/>
<rect x="15" y="170" width="1" height="1" fill="#e04000"/>
<rect x="14" y="171" width="1" height="1" fill="#e04000"/>
<rect x="13" y="172" width="1" height="1" fill="#e04000"/>
<rect x="13" y="173" width="1" height="1" fill="#e04000"/>
<rect x="14" y="174" width="1" height="1" fill="#e04000"/>
<rect x="15" y="175" width="1" height="1" fill="#e04000"/>
<rect x="16" y="171" width="1" height="1" fill="#305060"/>
<rect x="15" y="172" width="1" height="1" fill="#305060"/>
<rect x="15" y="173" width="1" height="1" fill="#305060"/>
<rect x="16" y="174" width="1" height="1" fill="#305060"/>
<rect x="11" y="319" width="49" height="6" fill="#ff0000"/>
<rect x="11" y="320" width="50" height="4" fill="#ff0000"/>
<rect x="11" y="321" width="51" height="2" fill="#ff0000"/>
<rect x="50" y="319" width="1" height="1" fill="#000"/>
<rect x="50" y="324" width="1" height="1" fill="#000"/>
<rect x="53" y="319" width="1" height="1" fill="#000"/>
<rect x="53" y="324" width="1" height="1" fill="#000"/>
<rect x="83" y="319" width="82" height="6" fill="#ff0000"/>
<rect x="82" y="320" width="84" height="4" fill="#ff0000"/>
<rect x="81" y="321" width="86" height="2" fill="#ff0000"/>
<rect x="172" y="319" width="863" height="6" fill="#ff0000"/>
<rect x="171" y="320" width="865" height="4" fill="#ff0000"/>
<rect x="170" y="321" width="867" height="2" fill="#ff0000"/>
<rect x="143" y="319" width="2" height="1" fill="#000"/>
<rect x="143" y="324" width="2" height="1" fill="#000"/>
<rect x="151" y="319" width="5" height="1" fill="#000"/>
<rect x="151" y="324" width="5" height="1" fill="#000"/>
<rect x="152" y="320" width="3" height="1" fill="#000"/>
<rect x="152" y="323" width="3" height="1" fill="#000"/>
<rect x="176" y="319" width="4" height="1" fill="#000"/>
<rect x="176" y="324" width="4" height="1" fill="#000"/>
<rect x="177" y="320" width="2" height="1" fill="#000"/>
<rect x="177" y="323" width="2" height="1" fill="#000"/>
<rect x="168" y="322" width="2" height="1" fill="#b4b4b4"/>
<rect x="1037" y="322" width="4" height="1" fill="#e04010"/>
<rect x="11" y="469" width="1024" height="6" fill="#00ff00"/>
<rect x="11" y="470" width="1025" height="4" fill="#00ff00"/>
<rect x="11" y="471" width="1026" height="2" fill="#00ff00"/>
<rect x="1037" y="472" width="4" height="1" fill="#3d7dc0"/>
<rect x="12" y="475" width="1" height="148" fill="#68d468"/>
<rect x="13" y="475" width="1" height="148" fill="#68d468"/>
<rect x="189" y="475" width="1" height="148" fill="#68d468"/>
<rect x="190" y="475" width="1" height="148" fill="#68d468"/>
<rect x="18" y="475" width="1" height="148" fill="#3d7dc0"/>
<rect x="20" y="475" width="1" height="148" fill="#3d7dc0"/>
<rect x="22" y="475" width="1" height="148" fill="#3d7dc0"/>
<rect x="23" y="475" width="1" height="148" fill="#3d7dc0"/>
<rect x="24" y="475" width="1" height="148" fill="#3d7dc0"/>
<rect x="28" y="475" width="1" height="148" fill="#3d7dc0"/>
<rect x="29" y="475" width="1" height="148" fill="#3d7dc0"/>
<rect x="33" y="475" width="1" height="148" fill="#3d7dc0"/>
<rect x="35" y="475" width="1" height="148" fill="#3d7dc0"/>
<rect x="38" y="475" width="1" height="148" fill="#3d7dc0"/>
<rect x="39" y="475" width="1" height="148" fill="#3d7dc0"/>
<rect x="40" y="475" width="1" height="148" fill="#3d7dc0"/>
<rect x="51" y="475" width="1" height="148" fill="#3d7dc0"/>
<rect x="52" y="475" width="1" height="148" fill="#3d7dc0"/>
<rect x="89" y="624" width="1" height="1" fill="#ffffff"/>
<rect x="94" y="624" width="1" height="1" fill="#ffffff"/>
<rect x="90" y="625" width="1" height="1" fill="#ffffff"/>
<rect x="94" y="625" width="1" height="1" fill="#ffffff"/>
<rect x="90" y="626" width="1" height="1" fill="#ffffff"/>
<rect x="93" y="626" width="1" height="1" fill="#ffffff"/>
<rect x="91" y="627" width="1" height="1" fill="#ffffff"/>
<rect x="93" y="627" width="1" height="1" fill="#ffffff"/>
<rect x="92" y="628" width="1" height="1" fill="#ffffff"/>
<rect x="234" y="624" width="1" height="1" fill="#ffffff"/>
<rect x="239" y="624" width="1" height="1" fill="#ffffff"/>
<rect x="235" y="625" width="1" height="1" fill="#ffffff"/>
<rect x="239" y="625" width="1" height="1" fill="#ffffff"/>
<rect x="235" y="626" width="1" height="1" fill="#ffffff"/>
<rect x="238" y="626" width="1" height="1" fill="#ffffff"/>
<rect x="236" y="627" width="1" height="1" fill="#ffffff"/>
<rect x="238" y="627" width="1" height="1" fill="#ffffff"/>
<rect x="237" y="628" width="1" height="1" fill="#ffffff"/>
<rect x="386" y="624" width="1" height="1" fill="#ffffff"/>
<rect x="391" y="624" width="1" height="1" fill="#ffffff"/>
<rect x="387" y="625" width="1" height="1" fill="#ffffff"/>
<rect x="391" y="625" width="1" height="1" fill="#ffffff"/>
<rect x="387" y="626" width="1" height="1" fill="#ffffff"/>
<rect x="390" y="626" width="1" height="1" fill="#ffffff"/>
<rect x="388" y="627" width="1" height="1" fill="#ffffff"/>
<rect x="390" y="627" width="1" height="1" fill="#ffffff"/>
<rect x="389" y="628" width="1" height="1" fill="#ffffff"/>
<rect x="556" y="624" width="1" height="1" fill="#ffffff"/>
<rect x="561" y="624" width="1" height="1" fill="#ffffff"/>
<rect x="557" y="625" width="1" height="1" fill="#ffffff"/>
<rect x="561" y="625" width="1" height="1" fill="#ffffff"/>
<rect x="557" y="626" width="1" height="1" fill="#ffffff"/>
<rect x="560" y="626" width="1" height="1" fill="#ffffff"/>
<rect x="558" y="627" width="1" height="1" fill="#ffffff"/>
<rect x="560" y="627" width="1" height="1" fill="#ffffff"/>
<rect x="559" y="628" width="1" height="1" fill="#ffffff"/>
<rect x="698" y="624" width="1" height="1" fill="#ffffff"/>
<rect x="703" y="624" width="1" height="1" fill="#ffffff"/>
<rect x="699" y="625" width="1" height="1" fill="#ffffff"/>
<rect x="703" y="625" width="1" height="1" fill="#ffffff"/>
<rect x="699" y="626" width="1" height="1" fill="#ffffff"/>
<rect x="702" y="626" width="1" height="1" fill="#ffffff"/>
<rect x="700" y="627" width="1" height="1" fill="#ffffff"/>
<rect x="702" y="627" width="1" height="1" fill="#ffffff"/>
<rect x="701" y="628" width="1" height="1" fill="#ffffff"/>
<rect x="848" y="624" width="1" height="1" fill="#ffffff"/>
<rect x="853" y="624" width="1" height="1" fill="#ffffff"/>
<rect x="849" y="625" width="1" height="1" fill="#ffffff"/>
<rect x="853" y="625" width="1" height="1" fill="#ffffff"/>
<rect x="849" y="626" width="1" height="1" fill="#ffffff"/>
<rect x="852" y="626" width="1" height="1" fill="#ffffff"/>
<rect x="850" y="627" width="1" height="1" fill="#ffffff"/>
<rect x="852" y="627" width="1" height="1" fill="#ffffff"/>
<rect x="851" y="628" width="1" height="1" fill="#ffffff"/>
<rect x="1030" y="624" width="1" height="1" fill="#a8a8a8"/>
<rect x="1035" y="624" width="1" height="1" fill="#a8a8a8"/>
<rect x="1031" y="625" width="1" height="1" fill="#a8a8a8"/>
<rect x="1035" y="625" width="1" height="1" fill="#a8a8a8"/>
<rect x="1031" y="626" width="1" height="1" fill="#a8a8a8"/>
<rect x="1034" y="626" width="1" height="1" fill="#a8a8a8"/>
<rect x="1032" y="627" width="1" height="1" fill="#a8a8a8"/>
<rect x="1034" y="627" width="1" height="1" fill="#a8a8a8"/>
<rect x="1033" y="628" width="1" height="1" fill="#a8a8a8"/>
</g>
<g shape-rendering="crispEdges">
<rect x="10" y="663" width="1032" height="137" fill="#c8c8c8"/>
<rect x="11" y="664" width="1030" height="135" fill="#000"/>
<rect x="17" y="700" width="10" height="8" fill="#108cf0"/>
<rect x="41" y="700" width="10" height="8" fill="#ff9000"/>
<rect x="17" y="712" width="10" height="8" fill="#66c866"/>
<rect x="41" y="712" width="10" height="8" fill="#c86464"/>
<rect x="17" y="724" width="10" height="8" fill="#00e8ff"/>
<rect x="41" y="724" width="10" height="8" fill="#ffff00"/>
<rect x="17" y="736" width="10" height="8" fill="#70c8ff"/>
<rect x="41" y="736" width="10" height="8" fill="#ffc870"/>
<rect x="17" y="748" width="10" height="8" fill="#0040a0"/>
<rect x="41" y="748" width="10" height="8" fill="#a06810"/>
<rect x="17" y="760" width="10" height="8" fill="#339944"/>
<rect x="41" y="760" width="10" height="8" fill="#9c4434"/>
<rect x="17" y="772" width="10" height="8" fill="#44aa55"/>
<rect x="41" y="772" width="10" height="8" fill="#b06050"/>
<rect x="17" y="784" width="10" height="8" fill="#4080c0"/>
<rect x="41" y="784" width="10" height="8" fill="#d03c0c"/>
<ellipse cx="290" cy="701" rx="3.5" ry="4.5" fill="#c0c0c0" stroke="#ffffff" stroke-width="1"/>
<ellipse cx="290" cy="713" rx="4" ry="3" fill="#00ff00"/>
<ellipse cx="290" cy="725" rx="4" ry="3" fill="#ff0000"/>

</g>
<defs><filter id="crisp" x="0" y="0" width="1103" height="807" filterUnits="userSpaceOnUse"><feComponentTransfer><feFuncA type="linear" slope="2.2" intercept="-0.7"/></feComponentTransfer></filter></defs>
<g filter="url(#crisp)">
<text x="9.20" y="15" font-size="11" fill="#ffffff" textLength="30.00" lengthAdjust="spacingAndGlyphs">Prices</text>
<text x="43.00" y="15" font-size="11" fill="#ffffff" textLength="13.10" lengthAdjust="spacingAndGlyphs">for</text>
<text x="62.20" y="15" font-size="11" fill="#ffffff" textLength="28.90" lengthAdjust="spacingAndGlyphs">ePSSI</text>
<text x="96.20" y="15" font-size="11" fill="#ffffff" textLength="12.00" lengthAdjust="spacingAndGlyphs">on</text>
<text x="114.20" y="15" font-size="11" fill="#ffffff" textLength="54.00" lengthAdjust="spacingAndGlyphs">04/24/2012</text>
<text x="174.60" y="15" font-size="11" fill="#ffffff">-</text>
<text x="184.20" y="15" font-size="11" fill="#ffffff" textLength="38.90" lengthAdjust="spacingAndGlyphs">Elapsed</text>
<text x="225.20" y="15" font-size="11" fill="#ffffff" textLength="24.90" lengthAdjust="spacingAndGlyphs">Time:</text>
<text x="253.20" y="15" font-size="11" fill="#ffffff" textLength="18.00" lengthAdjust="spacingAndGlyphs">175</text>
<text x="274.20" y="15" font-size="11" fill="#ffffff" textLength="58.00" lengthAdjust="spacingAndGlyphs">Milliseconds</text>
<text x="338.60" y="15" font-size="11" fill="#ffffff">-</text>
<text x="348.20" y="15" font-size="11" fill="#ffffff" textLength="23.90" lengthAdjust="spacingAndGlyphs">Total</text>
<text x="374.20" y="15" font-size="11" fill="#ffffff" textLength="37.90" lengthAdjust="spacingAndGlyphs">Quotes:</text>
<text x="415.20" y="15" font-size="11" fill="#ffffff" textLength="27.00" lengthAdjust="spacingAndGlyphs">5,643</text>
<text x="448.20" y="15" font-size="11" fill="#ffffff" textLength="23.90" lengthAdjust="spacingAndGlyphs">Total</text>
<text x="474.20" y="15" font-size="11" fill="#ffffff" textLength="37.90" lengthAdjust="spacingAndGlyphs">Trades:</text>
<text x="514.20" y="15" font-size="11" fill="#ffffff">0</text>
<text x="957.20" y="15" font-size="11" fill="#ffffff" textLength="67.00" lengthAdjust="spacingAndGlyphs">QTSequencer</text>
<text x="1027.20" y="15" font-size="11" fill="#ffffff" textLength="14.00" lengthAdjust="spacingAndGlyphs">G3</text>
<text x="1056.20" y="26" font-size="11" fill="#ffffff" textLength="27.00" lengthAdjust="spacingAndGlyphs">23.59</text>
<text x="1056.20" y="177" font-size="11" fill="#ffffff" textLength="27.00" lengthAdjust="spacingAndGlyphs">23.58</text>
<text x="1056.20" y="327" font-size="11" fill="#ffffff" textLength="27.00" lengthAdjust="spacingAndGlyphs">23.57</text>
<text x="1056.20" y="477" font-size="11" fill="#ffffff" textLength="27.00" lengthAdjust="spacingAndGlyphs">23.56</text>
<text x="1056.20" y="628" font-size="11" fill="#ffffff" textLength="27.00" lengthAdjust="spacingAndGlyphs">23.55</text>
<text x="7.20" y="639" font-size="10" fill="#ffffff" text-rendering="geometricPrecision">0</text>
<text x="182.20" y="639" font-size="10" fill="#ffffff" textLength="19.00" lengthAdjust="spacingAndGlyphs" text-rendering="geometricPrecision">1000</text>
<text x="362.20" y="639" font-size="10" fill="#ffffff" textLength="20.00" lengthAdjust="spacingAndGlyphs" text-rendering="geometricPrecision">2000</text>
<text x="543.20" y="639" font-size="10" fill="#ffffff" textLength="20.00" lengthAdjust="spacingAndGlyphs" text-rendering="geometricPrecision">3000</text>
<text x="725.00" y="639" font-size="10" fill="#ffffff" textLength="19.10" lengthAdjust="spacingAndGlyphs" text-rendering="geometricPrecision">4000</text>
<text x="906.20" y="639" font-size="10" fill="#ffffff" textLength="20.00" lengthAdjust="spacingAndGlyphs" text-rendering="geometricPrecision">5000</text>
<text x="65.20" y="651" font-size="10" fill="#ffffff" textLength="53.00" lengthAdjust="spacingAndGlyphs" text-rendering="geometricPrecision">15:51:48:850</text>
<text x="210.20" y="651" font-size="10" fill="#ffffff" textLength="53.00" lengthAdjust="spacingAndGlyphs" text-rendering="geometricPrecision">15:51:48:875</text>
<text x="362.20" y="651" font-size="10" fill="#ffffff" textLength="53.00" lengthAdjust="spacingAndGlyphs" text-rendering="geometricPrecision">15:51:48:900</text>
<text x="532.20" y="651" font-size="10" fill="#ffffff" textLength="53.00" lengthAdjust="spacingAndGlyphs" text-rendering="geometricPrecision">15:51:48:925</text>
<text x="674.20" y="651" font-size="10" fill="#ffffff" textLength="53.00" lengthAdjust="spacingAndGlyphs" text-rendering="geometricPrecision">15:51:48:950</text>
<text x="824.20" y="651" font-size="10" fill="#ffffff" textLength="53.00" lengthAdjust="spacingAndGlyphs" text-rendering="geometricPrecision">15:51:48:975</text>
<text x="14.20" y="681" font-size="11" fill="#ffffff" textLength="49.90" lengthAdjust="spacingAndGlyphs">ColorLgnd</text>
<text x="147.20" y="681" font-size="11" fill="#ffffff" textLength="95.00" lengthAdjust="spacingAndGlyphs">Reporting Exg Stats</text>
<text x="289.20" y="681" font-size="11" fill="#ffffff" textLength="82.00" lengthAdjust="spacingAndGlyphs">Composite/NBBO</text>
<text x="14.20" y="695" font-size="11" fill="#ffffff" textLength="15.00" lengthAdjust="spacingAndGlyphs">Bid</text>
<text x="39.00" y="695" font-size="11" fill="#ffffff" textLength="18.10" lengthAdjust="spacingAndGlyphs">Ask</text>
<text x="82.20" y="695" font-size="11" fill="#ffffff" textLength="18.90" lengthAdjust="spacingAndGlyphs">Exq</text>
<text x="153.20" y="695" font-size="11" fill="#ffffff" textLength="44.00" lengthAdjust="spacingAndGlyphs"># Quotes</text>
<text x="212.20" y="695" font-size="11" fill="#ffffff" textLength="43.00" lengthAdjust="spacingAndGlyphs"># Trades</text>
<text x="84.20" y="707" font-size="11" fill="#ffffff">NSDQ</text>
<text x="167.20" y="707" font-size="11" fill="#ffffff" textLength="27.00" lengthAdjust="spacingAndGlyphs">5,120</text>
<text x="248.20" y="707" font-size="11" fill="#ffffff">0</text>
<text x="84.20" y="719" font-size="11" fill="#ffffff">BOST</text>
<text x="176.20" y="719" font-size="11" fill="#ffffff" textLength="18.00" lengthAdjust="spacingAndGlyphs">368</text>
<text x="248.20" y="719" font-size="11" fill="#ffffff">0</text>
<text x="84.20" y="731" font-size="11" fill="#ffffff">PACF</text>
<text x="187.40" y="731" font-size="11" fill="#ffffff">1</text>
<text x="248.20" y="731" font-size="11" fill="#ffffff">0</text>
<text x="84.20" y="743" font-size="11" fill="#ffffff">BATS</text>
<text x="188.20" y="743" font-size="11" fill="#ffffff">5</text>
<text x="248.20" y="743" font-size="11" fill="#ffffff">0</text>
<text x="84.20" y="755" font-size="11" fill="#ffffff">CBOE</text>
<text x="188.60" y="755" font-size="11" fill="#ffffff">4</text>
<text x="248.20" y="755" font-size="11" fill="#ffffff">0</text>
<text x="84.20" y="767" font-size="11" fill="#ffffff">EDGX</text>
<text x="187.40" y="767" font-size="11" fill="#ffffff">1</text>
<text x="248.20" y="767" font-size="11" fill="#ffffff">0</text>
<text x="84.20" y="779" font-size="11" fill="#ffffff">EDGE</text>
<text x="188.20" y="779" font-size="11" fill="#ffffff">3</text>
<text x="248.20" y="779" font-size="11" fill="#ffffff">0</text>
<text x="84.20" y="791" font-size="11" fill="#ffffff">BATY</text>
<text x="176.20" y="791" font-size="11" fill="#ffffff" textLength="16.90" lengthAdjust="spacingAndGlyphs">141</text>
<text x="248.20" y="791" font-size="11" fill="#ffffff">0</text>
<text x="299.20" y="705" font-size="11" fill="#ffffff" textLength="87.00" lengthAdjust="spacingAndGlyphs">Composite Trades</text>
<text x="299.20" y="717" font-size="11" fill="#ffffff" textLength="81.90" lengthAdjust="spacingAndGlyphs">National Best Bid</text>
<text x="299.20" y="729" font-size="11" fill="#ffffff" textLength="85.00" lengthAdjust="spacingAndGlyphs">National Best Ask</text>
<text x="802.20" y="794" font-size="11" fill="#dcdcdc" textLength="207.00" lengthAdjust="spacingAndGlyphs">For additional information: www.nanex.net</text>
</g>
</svg>
</body></html>
